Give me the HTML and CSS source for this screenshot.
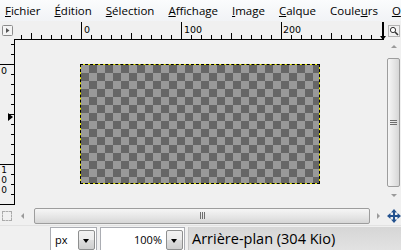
FILE: index.html
```html
<!DOCTYPE html>
<html lang="fr">
<head>
<meta charset="utf-8">
<title>GIMP</title>
<link rel="stylesheet" href="styles.css">
</head>
<body>
<div class="app">
  <div class="menubar">
    <span class="mi"><u>F</u>ichier</span>
    <span class="mi"><u>É</u>dition</span>
    <span class="mi"><u>S</u>élection</span>
    <span class="mi"><u>A</u>ffichage</span>
    <span class="mi"><u>I</u>mage</span>
    <span class="mi"><u>C</u>alque</span>
    <span class="mi">Coule<u>u</u>rs</span>
    <span class="mi"><u>O</u></span>
  </div>
  <div class="toprow">
    <div class="corner">
      <svg width="11" height="11" viewBox="0 0 11 11"><rect x="0.5" y="0.5" width="10" height="10" rx="1" fill="#f4f4f4" stroke="#8c8c8c"/><path d="M4 3 L7.5 5.5 L4 8 Z" fill="#555"/></svg>
    </div>
    <div class="hruler">
      <svg width="372" height="19" viewBox="0 0 372 19">
        <rect x="0" y="18" width="370" height="1" fill="#000"/>
        <g fill="#000">
          <rect x="7" y="14" width="1" height="4"/>
          <rect x="17" y="12" width="1" height="6"/>
          <rect x="27" y="14" width="1" height="4"/>
          <rect x="37" y="14" width="1" height="4"/>
          <rect x="47" y="14" width="1" height="4"/>
          <rect x="57" y="14" width="1" height="4"/>
          <rect x="67" y="1" width="1" height="17"/>
          <rect x="77" y="14" width="1" height="4"/>
          <rect x="87" y="14" width="1" height="4"/>
          <rect x="97" y="14" width="1" height="4"/>
          <rect x="107" y="14" width="1" height="4"/>
          <rect x="117" y="12" width="1" height="6"/>
          <rect x="127" y="14" width="1" height="4"/>
          <rect x="137" y="14" width="1" height="4"/>
          <rect x="147" y="14" width="1" height="4"/>
          <rect x="157" y="14" width="1" height="4"/>
          <rect x="167" y="1" width="1" height="17"/>
          <rect x="177" y="14" width="1" height="4"/>
          <rect x="187" y="14" width="1" height="4"/>
          <rect x="197" y="14" width="1" height="4"/>
          <rect x="207" y="14" width="1" height="4"/>
          <rect x="217" y="12" width="1" height="6"/>
          <rect x="227" y="14" width="1" height="4"/>
          <rect x="237" y="14" width="1" height="4"/>
          <rect x="247" y="14" width="1" height="4"/>
          <rect x="257" y="14" width="1" height="4"/>
          <rect x="267" y="1" width="1" height="17"/>
          <rect x="277" y="14" width="1" height="4"/>
          <rect x="287" y="14" width="1" height="4"/>
          <rect x="297" y="14" width="1" height="4"/>
          <rect x="307" y="14" width="1" height="4"/>
          <rect x="317" y="12" width="1" height="6"/>
          <rect x="327" y="14" width="1" height="4"/>
          <rect x="337" y="14" width="1" height="4"/>
          <rect x="347" y="14" width="1" height="4"/>
          <rect x="357" y="14" width="1" height="4"/>
          <rect x="368" y="1" width="2" height="17"/>
          <path d="M366 15 L372 15 L369 19 Z"/>
        </g>
        <g class="rlabel">
          <text x="70" y="12">0</text>
          <text x="170" y="12">100</text>
          <text x="269" y="12">200</text>
        </g>
      </svg>
    </div>
    <div class="zoombtn">
      <svg width="12" height="12" viewBox="0 0 12 12"><rect x="0.5" y="0.5" width="11" height="11" fill="none" stroke="#777" stroke-dasharray="1 1"/><circle cx="5" cy="5" r="2.6" fill="#fff" stroke="#333"/><path d="M7 7 L10 10" stroke="#333" stroke-width="1.6"/></svg>
    </div>
  </div>
  <div class="midrow">
    <div class="vruler">
      <svg width="16" height="166" viewBox="0 0 16 166">
        <g fill="#000">
          <rect x="14" y="0" width="1" height="165"/>
          <rect x="0" y="164" width="15" height="1"/>
          <rect x="11" y="4" width="3" height="1"/>
          <rect x="11" y="14" width="3" height="1"/>
          <rect x="0" y="24" width="14" height="1"/>
          <rect x="11" y="34" width="3" height="1"/>
          <rect x="11" y="44" width="3" height="1"/>
          <rect x="11" y="54" width="3" height="1"/>
          <rect x="11" y="64" width="3" height="1"/>
          <rect x="9" y="74" width="5" height="1"/>
          <rect x="11" y="84" width="3" height="1"/>
          <rect x="11" y="94" width="3" height="1"/>
          <rect x="11" y="104" width="3" height="1"/>
          <rect x="11" y="114" width="3" height="1"/>
          <rect x="0" y="124" width="14" height="1"/>
          <rect x="11" y="134" width="3" height="1"/>
          <rect x="11" y="144" width="3" height="1"/>
          <rect x="11" y="154" width="3" height="1"/>
          <path d="M8 73 L13 77 L8 81 Z"/>
        </g>
        <g class="rlabel">
          <text x="1" y="34">0</text>
          <text class="vtext" x="4" y="125">100</text>
        </g>
      </svg>
    </div>
    <div class="canvas">
      <div class="image"></div>
    </div>
    <div class="vscroll">
      <div class="arrow up"></div>
      <div class="vthumb"><span class="grip"></span></div>
      <div class="arrow down"></div>
    </div>
  </div>
  <div class="botrow">
    <div class="qmask"><span class="qbox"></span></div>
    <div class="hscroll">
      <div class="arrow left"></div>
      <div class="hthumb"><span class="hgrip"></span></div>
      <div class="arrow right"></div>
    </div>
    <div class="nav">
      <svg width="14" height="14" viewBox="0 0 14 14"><path d="M7 0 L10 3.5 L8 3.5 L8 6 L10.5 6 L10.5 4 L14 7 L10.5 10 L10.5 8 L8 8 L8 10.5 L10 10.5 L7 14 L4 10.5 L6 10.5 L6 8 L3.5 8 L3.5 10 L0 7 L3.5 4 L3.5 6 L6 6 L6 3.5 L4 3.5 Z" fill="#24528f"/></svg>
    </div>
  </div>
  <div class="status">
    <div class="combo unit">
      <span class="ctext">px</span>
      <span class="cbtn"></span>
    </div>
    <div class="combo zoom">
      <span class="ctext right">100%</span>
      <span class="cbtn"></span>
    </div>
    <div class="label">Arrière-plan (304 Kio)</div>
  </div>
</div>
</body>
</html>
```

FILE: styles.css
```css
* { box-sizing: border-box; }
html, body { margin: 0; padding: 0; }
body {
  width: 401px;
  height: 250px;
  overflow: hidden;
  background: #f0f0f0;
  font-family: "Open Sans", "Liberation Sans", sans-serif;
  color: #000;
}
.app { width: 401px; height: 250px; display: flex; flex-direction: column; }

.menubar {
  height: 21px;
  display: flex;
  align-items: center;
  padding-left: 5px;
  gap: 14px;
  font-size: 11.5px;
  background: linear-gradient(#fbfcfd, #f1f3f6);
  white-space: nowrap;
}
.mi u { text-decoration: underline; text-underline-offset: 1px; }

.toprow { height: 19px; display: flex; }
.corner { width: 14px; display: flex; padding: 4px 0 0 2px; }
.hruler { width: 372px; }
.hruler svg, .vruler svg { display: block; }
.zoombtn { width: 15px; display: flex; padding: 4px 0 0 2px; }
.rlabel text { font-family: "DejaVu Sans", sans-serif; font-size: 9.5px; fill: #000; }
.rlabel text.vtext {
  font-size: 9px;
  writing-mode: vertical-lr;
  text-orientation: upright;
}

.midrow { height: 166px; display: flex; }
.vruler { width: 16px; }
.canvas {
  width: 370px;
  height: 166px;
  background: #f0f0f0;
  padding: 24px 0 0 64px;
}
.image {
  width: 240px;
  height: 120px;
  border: 1px dashed #000;
  background: repeating-conic-gradient(#666666 0 25%, #999999 0 50%) 0 0 / 16px 16px padding-box, #e6e600;
}

.vscroll {
  width: 15px;
  display: flex;
  flex-direction: column;
  align-items: center;
  background: #f0f0f0;
}
.arrow { width: 0; height: 0; border-style: solid; border-color: transparent; }
.arrow.up { margin-top: 5px; border-width: 0 3.5px 3.5px 3.5px; border-bottom-color: #9a9a9a; }
.arrow.down { margin-top: 7px; border-width: 3.5px 3.5px 0 3.5px; border-top-color: #9a9a9a; }
.vthumb {
  margin-top: 10px;
  width: 13px;
  height: 129px;
  border: 1px solid #9d9d9d;
  border-radius: 2px;
  background: linear-gradient(90deg, #f6f6f6, #e4e4e4 60%, #d6d6d6);
  display: flex;
  align-items: center;
  justify-content: center;
}
.grip {
  width: 7px; height: 5px;
  background: repeating-linear-gradient(#6e6e6e 0 1px, transparent 1px 2px);
}

.botrow { height: 19px; display: flex; align-items: center; }
.qmask { width: 16px; display: flex; padding-left: 2px; }
.qbox { width: 10px; height: 10px; border: 1px dashed #aaa; }
.hscroll {
  width: 370px;
  height: 17px;
  display: flex;
  align-items: center;
}
.arrow.left { margin-left: 5px; border-width: 3.5px 3.5px 3.5px 0; border-right-color: #9a9a9a; }
.arrow.right { margin-left: 7px; border-width: 3.5px 0 3.5px 3.5px; border-left-color: #9a9a9a; }
.hthumb {
  margin-left: 10px;
  width: 336px;
  height: 16px;
  border: 1px solid #9d9d9d;
  border-radius: 2px;
  background: linear-gradient(#f6f6f6, #e4e4e4 60%, #d6d6d6);
  display: flex;
  align-items: center;
  justify-content: center;
}
.hgrip {
  width: 5px; height: 7px;
  background: repeating-linear-gradient(90deg, #6e6e6e 0 1px, transparent 1px 2px);
}
.nav { width: 15px; display: flex; justify-content: center; }

.status {
  height: 25px;
  display: flex;
  align-items: flex-end;
  padding-left: 50px;
  gap: 3px;
  border-top: 1px solid #e2e2e2;
}
.combo {
  height: 23px;
  display: flex;
  align-items: center;
  background: #fff;
  border: 1px solid #abadb3;
  border-bottom: none;
  font-size: 11px;
  padding: 1px 1px 0 0;
}
.combo.unit { width: 47px; }
.combo.zoom { width: 85px; }
.ctext { flex: 1; padding-left: 4px; }
.ctext.right { text-align: right; padding-right: 4px; }
.cbtn {
  width: 17px;
  height: 20px;
  align-self: flex-start;
  margin-top: 1px;
  border: 1px solid #8e8f8f;
  border-radius: 2px;
  background: linear-gradient(#f2f2f2, #ebebeb 50%, #dddddd 50%, #cfcfcf);
  position: relative;
}
.cbtn::after {
  content: "";
  position: absolute;
  left: 4px; top: 8px;
  border-style: solid;
  border-width: 4px 3.5px 0 3.5px;
  border-color: #000 transparent transparent transparent;
}
.label {
  flex: 1;
  height: 23px;
  display: flex;
  align-items: center;
  padding-left: 3px;
  font-size: 14.5px;
  background: linear-gradient(#d6d6d6, #e2e2e2);
  border-left: 1px solid #c8c8c8;
  white-space: nowrap;
}
```
